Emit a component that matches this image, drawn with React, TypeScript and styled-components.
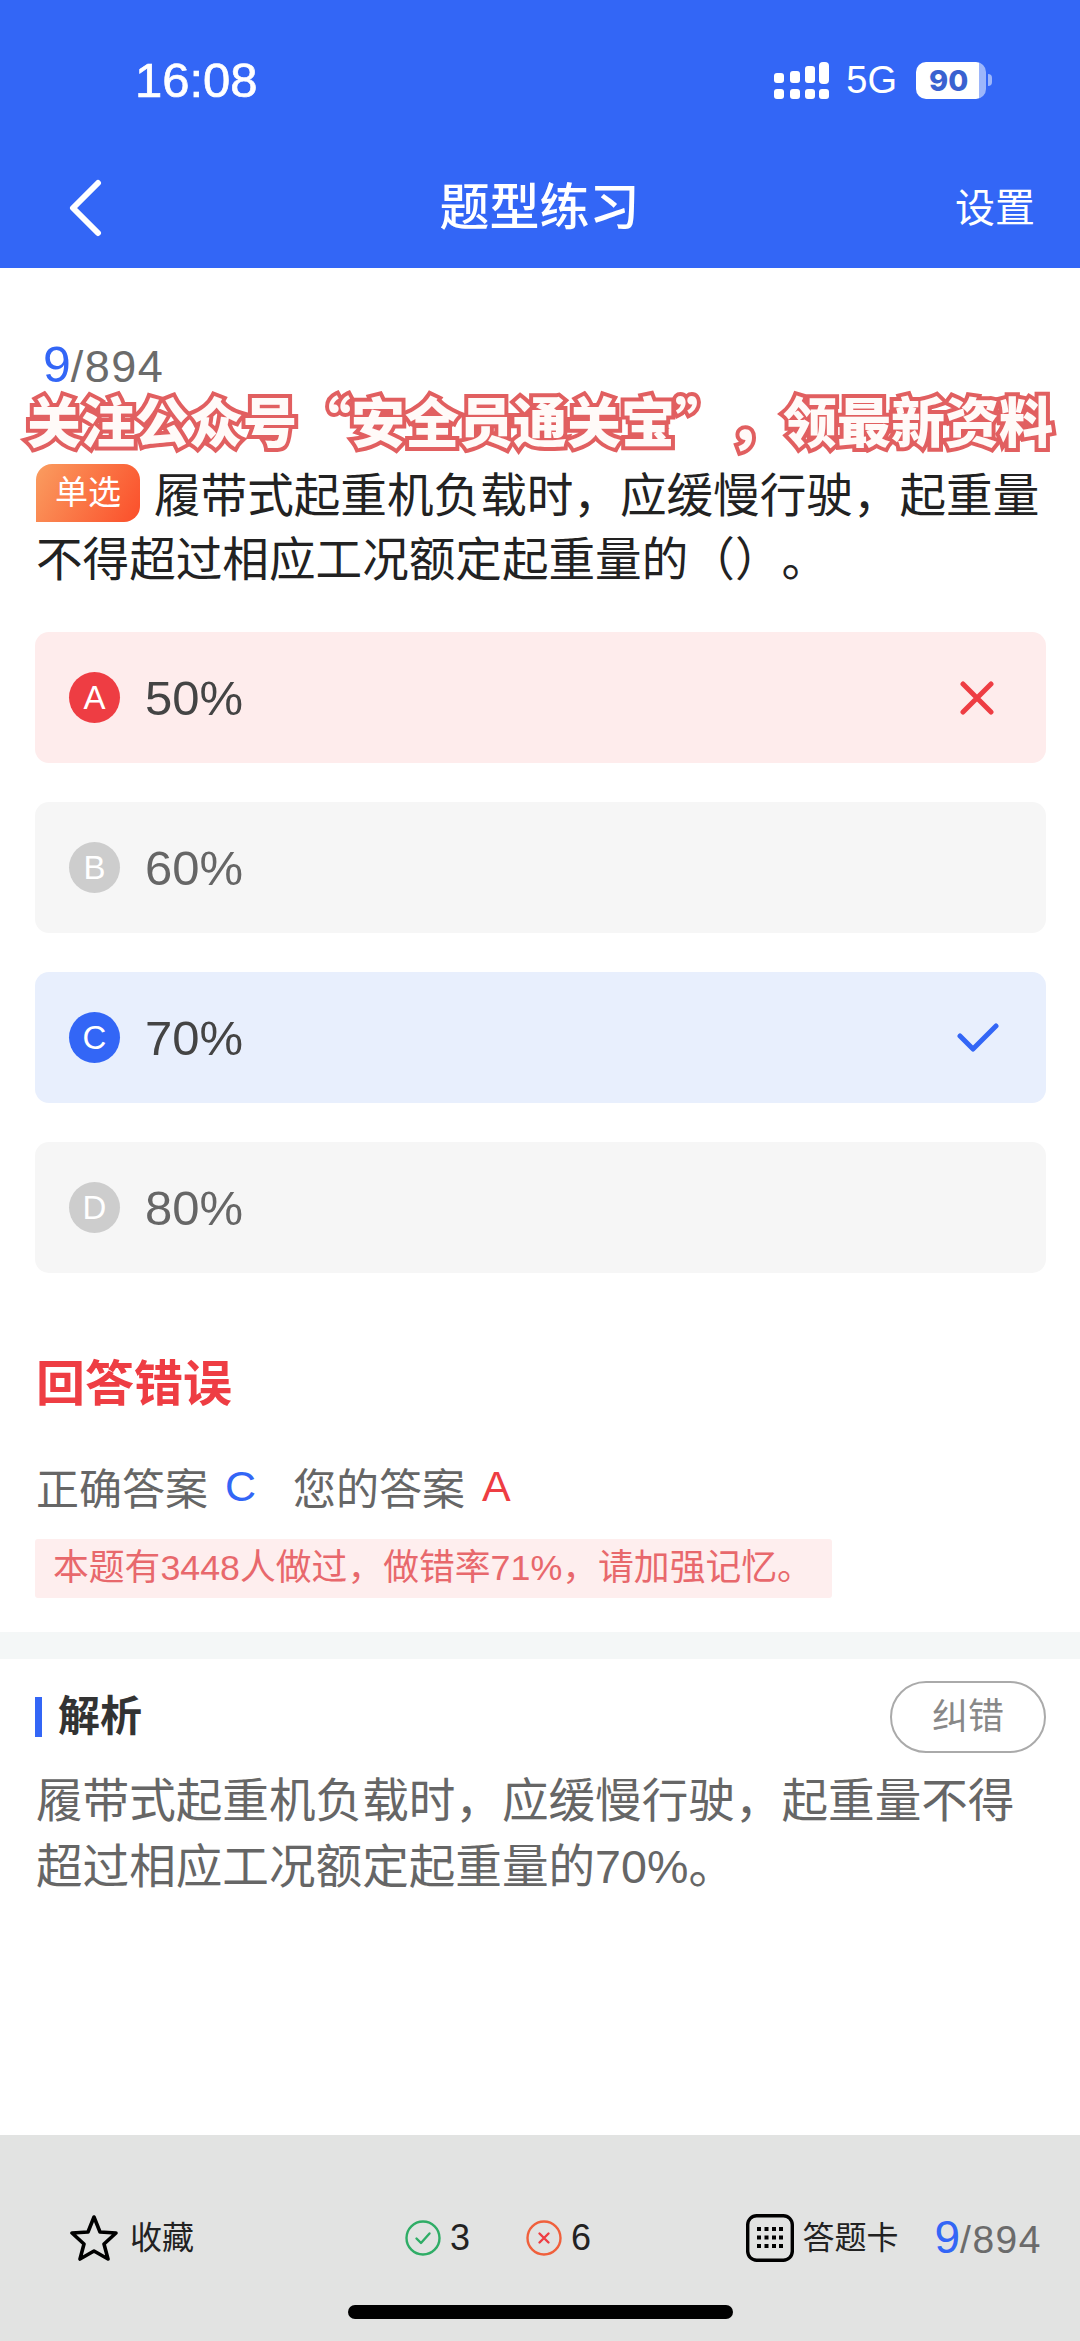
import React from "react";
import styled, { createGlobalStyle } from "styled-components";

const blue = "#3366f6";
const red = "#ee3d43";
const sans = `"Liberation Sans", "Noto Sans CJK SC", sans-serif`;

const GlobalStyle = createGlobalStyle`
  html, body {
    margin: 0;
    padding: 0;
    background: #fff;
    font-family: ${sans};
    text-spacing-trim: space-all;
  }
  * {
    box-sizing: border-box;
  }
`;

const Page = styled.div`
  width: 1080px;
  height: 2341px;
  display: flex;
  flex-direction: column;
  overflow: hidden;
  background: #fff;
`;

const Header = styled.header`
  height: 268px;
  background: ${blue};
  color: #fff;
  display: flex;
  flex-direction: column;
`;

const StatusBar = styled.div`
  height: 110px;
  padding: 50px 88px 0 135px;
  display: flex;
  align-items: center;
  justify-content: space-between;
`;

const Clock = styled.span`
  font-size: 49px;
  line-height: 60px;
  -webkit-text-stroke: 0.7px #fff;
`;

const StatusIcons = styled.div`
  display: flex;
  align-items: center;
`;

const Network = styled.span`
  font-size: 38px;
  margin: 0 19px 0 17px;
  line-height: 40px;
`;

const Battery = styled.span`
  width: 70px;
  height: 37px;
  border-radius: 10px;
  background: linear-gradient(to right, #fff 90%, #9db6fb 90%);
  color: #3a62d0;
  font-family: Inter, sans-serif;
  font-size: 29px;
  font-weight: 800;
  line-height: 37px;
  padding-left: 13px;
`;

const BatteryTip = styled.span`
  width: 4px;
  height: 12px;
  margin-left: 2px;
  border-radius: 0 4px 4px 0;
  background: #9db6fb;
`;

const NavBar = styled.nav`
  height: 72px;
  margin-top: 62px;
  padding: 0 45px 0 44px;
  display: grid;
  grid-template-columns: 1fr auto 1fr;
  align-items: center;
`;

const NavBack = styled.span`
  display: flex;
  margin-left: 22px;
`;

const NavTitle = styled.h1`
  margin: 0;
  font-size: 50px;
  font-weight: 500;
  line-height: 72px;
`;

const NavAction = styled.span`
  justify-self: end;
  font-size: 40px;
  line-height: 72px;
`;

const Content = styled.main`
  flex: 1;
  display: flex;
  flex-direction: column;
`;

const Counter = styled.div<{ $size: number; $track: number }>`
  color: #6b6b6b;
  font-size: ${(p) => p.$size}px;
  letter-spacing: ${(p) => p.$track}px;
  line-height: 56px;
`;

const CounterCurrent = styled.span<{ $size: number }>`
  color: ${blue};
  font-size: ${(p) => p.$size}px;
  letter-spacing: 0;
`;

const TopCounter = styled.div`
  margin-top: 69px;
  padding-left: 43px;
`;

const Promo = styled.div`
  height: 62px;
  padding-left: 27px;
  color: #fffaf8;
  font-family: "Noto Sans CJK SC", sans-serif;
  font-size: 54px;
  font-weight: 900;
  line-height: 50px;
  white-space: nowrap;
  -webkit-text-stroke: 8px #e15f60;
  paint-order: stroke fill;
  text-shadow: 1px 3px 0 #e15f60;
`;

const Question = styled.p`
  margin: 7px 0 0;
  padding: 0 34px 0 36px;
  color: #222;
  font-size: 46.6px;
  line-height: 64px;
`;

const TypeTag = styled.span`
  display: inline-block;
  width: 104px;
  height: 58px;
  margin-right: 14px;
  border-radius: 16px 16px 16px 0;
  background: linear-gradient(120deg, #fa9d60, #fb4e2a);
  color: #fff;
  font-size: 33px;
  line-height: 58px;
  text-align: center;
  vertical-align: top;
`;

const Options = styled.div`
  margin: 40px 34px 0 35px;
  display: flex;
  flex-direction: column;
  gap: 39px;
`;

type OptionState = "wrong" | "right" | "idle";

const optionBg: Record<OptionState, string> = {
  wrong: "#feecec",
  right: "#e8effd",
  idle: "#f6f6f6",
};

const optionDot: Record<OptionState, string> = {
  wrong: red,
  right: blue,
  idle: "#cdcdcd",
};

const optionText: Record<OptionState, string> = {
  wrong: "#444",
  right: "#444",
  idle: "#666",
};

const OptionRow = styled.div<{ $state: OptionState }>`
  height: 131px;
  padding: 0 47px 0 34px;
  border-radius: 14px;
  background: ${(p) => optionBg[p.$state]};
  color: ${(p) => optionText[p.$state]};
  display: flex;
  align-items: center;
  font-size: 49px;
`;

const OptionDot = styled.span<{ $state: OptionState }>`
  width: 51px;
  height: 51px;
  margin-right: 25px;
  border-radius: 50%;
  background: ${(p) => optionDot[p.$state]};
  color: #fff;
  font-size: 33px;
  font-weight: 500;
  line-height: 51px;
  text-align: center;
`;

const OptionLabel = styled.span`
  flex: 1;
`;

const Verdict = styled.h2`
  margin: 81px 0 0;
  padding-left: 36px;
  color: ${red};
  font-size: 49px;
  font-weight: 700;
  line-height: 60px;
`;

const AnswerRow = styled.div`
  margin-top: 42px;
  padding-left: 36px;
  height: 60px;
  display: flex;
  align-items: center;
  color: #666;
  font-size: 43px;
`;

const AnswerLetter = styled.span<{ $color: string }>`
  margin: 0 37px 0 17px;
  color: ${(p) => p.$color};
`;

const Notice = styled.div`
  width: 797px;
  height: 59px;
  margin: 23px 0 0 35px;
  padding-left: 18px;
  border-radius: 3px;
  background: #feeeee;
  color: #e8686c;
  font-size: 35.8px;
  line-height: 59px;
  white-space: nowrap;
`;

const SectionGap = styled.div`
  height: 27px;
  margin-top: 34px;
  background: #f4f7f7;
`;

const AnalysisHead = styled.div`
  margin-top: 22px;
  padding: 0 34px 0 35px;
  height: 72px;
  display: flex;
  align-items: center;
  justify-content: space-between;
`;

const AnalysisTitle = styled.h3`
  margin: 0;
  padding-left: 16px;
  border-left: 7px solid ${blue};
  color: #333;
  font-size: 42px;
  font-weight: 700;
  line-height: 40px;
`;

const ReportButton = styled.span`
  width: 156px;
  height: 72px;
  border: 2px solid #aaa;
  border-radius: 36px;
  color: #888;
  font-size: 36px;
  line-height: 68px;
  text-align: center;
`;

const AnalysisBody = styled.p`
  margin: 15px 0 0;
  padding: 0 34px 0 36px;
  color: #666;
  font-size: 46.6px;
  line-height: 66px;
`;

const Footer = styled.footer`
  height: 206px;
  padding: 78px 38px 0 70px;
  background: #e2e3e2;
  position: relative;
`;

const FooterRow = styled.div`
  height: 50px;
  display: flex;
  align-items: center;
`;

const FooterText = styled.span`
  color: #222;
  font-size: 32px;
  line-height: 50px;
`;

const Collect = styled.div`
  display: flex;
  align-items: center;
  gap: 12px;
  width: 335px;
`;

const Score = styled.div`
  display: flex;
  align-items: center;
  gap: 9px;
  font-size: 36px;
  color: #222;
  margin-right: 56px;
`;

const CardEntry = styled.div`
  margin-left: auto;
  display: flex;
  align-items: center;
  gap: 8px;
`;

const FooterCounter = styled.div`
  margin-left: 36px;
`;

const HomeBar = styled.div`
  position: absolute;
  left: 348px;
  bottom: 22px;
  width: 385px;
  height: 14px;
  border-radius: 7px;
  background: #000;
`;

const CrossSvg = styled.svg`
  margin-right: 5px;
`;

const options: { key: string; text: string; state: OptionState; mark?: "x" | "check" }[] = [
  { key: "A", text: "50%", state: "wrong", mark: "x" },
  { key: "B", text: "60%", state: "idle" },
  { key: "C", text: "70%", state: "right", mark: "check" },
  { key: "D", text: "80%", state: "idle" },
];

const signalTops = [
  { x: 0, y: 11, h: 10, r: 3 },
  { x: 16, y: 9, h: 12, r: 3 },
  { x: 31, y: 4, h: 17, r: 3 },
  { x: 45, y: 0, h: 22, r: 4 },
];

const SignalIcon = () => (
  <svg width="55" height="37" viewBox="0 0 55 37" fill="#fff">
    {signalTops.map((b) => (
      <React.Fragment key={b.x}>
        <rect x={b.x} y={b.y} width="10" height={b.h} rx={b.r} />
        <rect x={b.x} y="27" width="10" height="10" rx="3" />
      </React.Fragment>
    ))}
  </svg>
);

const BackIcon = () => (
  <svg width="38" height="58" viewBox="0 0 38 58" fill="none" stroke="#fff" strokeWidth="6" strokeLinecap="round" strokeLinejoin="round">
    <path d="M32 4 L7 29 L32 54" />
  </svg>
);

const CrossIcon = () => (
  <CrossSvg width="34" height="34" viewBox="0 0 34 34" fill="none" stroke={red} strokeWidth="5" strokeLinecap="round">
    <path d="M3 3 L31 31 M31 3 L3 31" />
  </CrossSvg>
);

const CheckIcon = () => (
  <svg width="42" height="29" viewBox="0 0 42 29" fill="none" stroke={blue} strokeWidth="5" strokeLinecap="round" strokeLinejoin="round">
    <path d="M3 13 L16 26 L39 3" />
  </svg>
);

const StarIcon = () => (
  <svg width="48" height="48" viewBox="0 0 48 48" fill="none" stroke="#000" strokeWidth="3.6" strokeLinejoin="round">
    <path d="M24 3 L30 18 L46 19 L34 30 L38 45 L24 37 L10 45 L14 30 L2 19 L18 18 Z" />
  </svg>
);

const RightIcon = () => (
  <svg width="36" height="36" viewBox="0 0 36 36" fill="none" stroke="#2fad66" strokeWidth="2.4" strokeLinecap="round" strokeLinejoin="round">
    <circle cx="18" cy="18" r="16.5" />
    <path d="M11.5 18.5 L16 23 L24.5 13.5" />
  </svg>
);

const WrongIcon = () => (
  <svg width="36" height="36" viewBox="0 0 36 36" fill="none" stroke="#f0603c" strokeWidth="2.4" strokeLinecap="round">
    <circle cx="18" cy="18" r="16.5" />
    <path d="M13.5 13.5 L22.5 22.5 M22.5 13.5 L13.5 22.5" stroke="#ee3d43" />
  </svg>
);

const GridIcon = () => (
  <svg width="48" height="48" viewBox="0 0 48 48" fill="none">
    <rect x="1.7" y="1.7" width="44.6" height="44.6" rx="9" stroke="#000" strokeWidth="3.4" />
    {[15, 23.5, 32].map((y) =>
      [13, 20.5, 28, 35].map((x) => <rect key={`${x}-${y}`} x={x - 2} y={y - 2} width="4" height="4" fill="#000" />)
    )}
  </svg>
);

export default function App() {
  return (
    <Page>
      <GlobalStyle />
      <Header>
        <StatusBar>
          <Clock>16:08</Clock>
          <StatusIcons>
            <SignalIcon />
            <Network>5G</Network>
            <Battery>90</Battery>
            <BatteryTip />
          </StatusIcons>
        </StatusBar>
        <NavBar>
          <NavBack>
            <BackIcon />
          </NavBack>
          <NavTitle>题型练习</NavTitle>
          <NavAction>设置</NavAction>
        </NavBar>
      </Header>
      <Content>
        <TopCounter>
          <Counter $size={45} $track={1.5}>
            <CounterCurrent $size={50}>9</CounterCurrent>/894
          </Counter>
        </TopCounter>
        <Promo>关注公众号“安全员通关宝”，领最新资料</Promo>
        <Question>
          <TypeTag>单选</TypeTag>
          履带式起重机负载时，应缓慢行驶，起重量不得超过相应工况额定起重量的（）。
        </Question>
        <Options>
          {options.map((o) => (
            <OptionRow key={o.key} $state={o.state}>
              <OptionDot $state={o.state}>{o.key}</OptionDot>
              <OptionLabel>{o.text}</OptionLabel>
              {o.mark === "x" && <CrossIcon />}
              {o.mark === "check" && <CheckIcon />}
            </OptionRow>
          ))}
        </Options>
        <Verdict>回答错误</Verdict>
        <AnswerRow>
          正确答案
          <AnswerLetter $color={blue}>C</AnswerLetter>
          您的答案
          <AnswerLetter $color={red}>A</AnswerLetter>
        </AnswerRow>
        <Notice>本题有3448人做过，做错率71%，请加强记忆。</Notice>
        <SectionGap />
        <AnalysisHead>
          <AnalysisTitle>解析</AnalysisTitle>
          <ReportButton>纠错</ReportButton>
        </AnalysisHead>
        <AnalysisBody>履带式起重机负载时，应缓慢行驶，起重量不得超过相应工况额定起重量的70%。</AnalysisBody>
      </Content>
      <Footer>
        <FooterRow>
          <Collect>
            <StarIcon />
            <FooterText>收藏</FooterText>
          </Collect>
          <Score>
            <RightIcon />3
          </Score>
          <Score>
            <WrongIcon />6
          </Score>
          <CardEntry>
            <GridIcon />
            <FooterText>答题卡</FooterText>
          </CardEntry>
          <FooterCounter>
            <Counter $size={39} $track={1.5}>
              <CounterCurrent $size={46}>9</CounterCurrent>/894
            </Counter>
          </FooterCounter>
        </FooterRow>
        <HomeBar />
      </Footer>
    </Page>
  );
}
